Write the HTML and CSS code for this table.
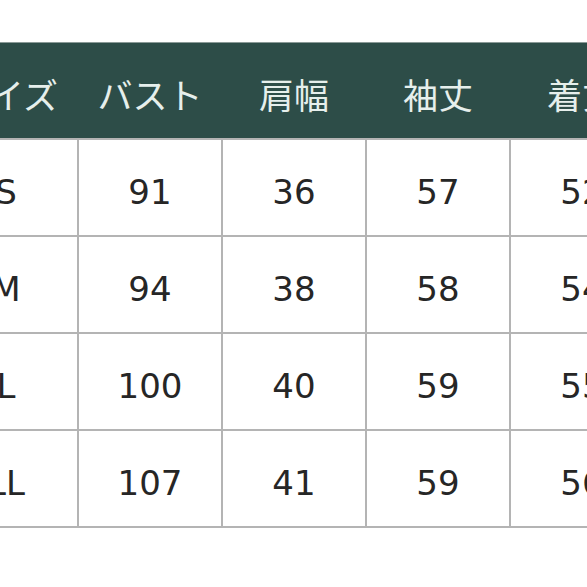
FILE: index.html
```html
<!DOCTYPE html>
<html lang="ja">
<head>
<meta charset="utf-8">
<link rel="stylesheet" href="styles.css">
</head>
<body>
<table class="size-table">
  <thead>
    <tr>
      <th>サイズ</th><th>バスト</th><th>肩幅</th><th>袖丈</th><th>着丈</th>
    </tr>
  </thead>
  <tbody>
    <tr><td>S</td><td>91</td><td>36</td><td>57</td><td>52</td></tr>
    <tr><td>M</td><td>94</td><td>38</td><td>58</td><td>54</td></tr>
    <tr><td>L</td><td>100</td><td>40</td><td>59</td><td>55</td></tr>
    <tr><td>LL</td><td>107</td><td>41</td><td>59</td><td>56</td></tr>
  </tbody>
</table>
</body>
</html>
```
FILE: styles.css
```css
html, body {
  margin: 0;
  padding: 0;
  background: #ffffff;
}
body {
  padding-top: 42px;
  overflow: hidden;
}
.size-table {
  margin-left: -67px;
  border-collapse: collapse;
  table-layout: fixed;
  width: 720px;
}
.size-table th,
.size-table td {
  width: 144px;
  text-align: center;
  padding: 0;
}
.size-table th {
  height: 96px;
  background: #2d4d48;
  color: #e6efec;
  font-family: "Noto Sans CJK JP", "Noto Sans", sans-serif;
  font-weight: 400;
  font-size: 35px;
  padding-top: 6px;
  box-sizing: border-box;
  border-top: 1px solid #8a9a97;
}
.size-table td {
  height: 97px;
  box-sizing: border-box;
  border: 2px solid #b4b4b4;
  color: #262626;
  font-family: "DejaVu Sans", Verdana, sans-serif;
  font-size: 34px;
  padding-top: 10px;
}
.size-table thead th {
  border-left: 0;
  border-right: 0;
}
```
